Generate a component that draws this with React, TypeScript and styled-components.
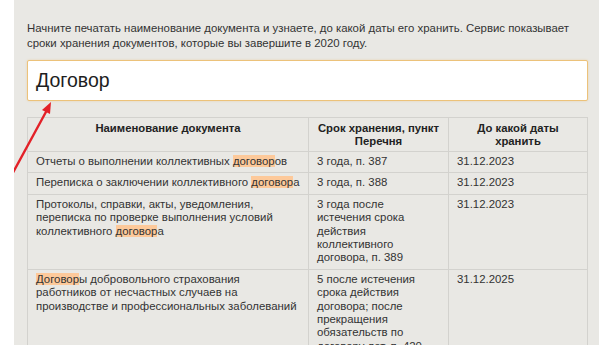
import styled, { createGlobalStyle } from 'styled-components';

const GlobalStyle = createGlobalStyle`
  html, body {
    margin: 0;
    padding: 0;
    background: #ffffff;
  }
  body {
    font-family: 'Liberation Sans', Arial, sans-serif;
  }
`;

const Page = styled.div`
  position: relative;
  margin-left: 14px;
  height: 345px;
  overflow: hidden;
  background: #e9e8e4;
  padding: 21px 11px 0 13px;
  box-sizing: border-box;
  color: #2b2b2b;
  font-family: 'Liberation Sans', Arial, sans-serif;
`;

const Intro = styled.p`
  margin: 0 0 9px;
  font-size: 11.4px;
  line-height: 15px;
  color: #333;
  white-space: nowrap;
`;

const SearchInput = styled.div`
  height: 41px;
  box-sizing: border-box;
  background: #fff;
  border: 1px solid #ecc27a;
  border-radius: 2px;
  box-shadow: 0 0 2px rgba(236, 194, 122, 0.6);
  padding: 0 8px;
  display: flex;
  align-items: center;
  font-size: 19.5px;
  color: #1e1e1e;
  margin-bottom: 16px;
`;

const Table = styled.table`
  width: 100%;
  border-collapse: collapse;
  table-layout: fixed;
  font-family: 'Liberation Sans', Arial, sans-serif;
  font-size: 11.4px;
  line-height: 13.4px;
`;

const Th = styled.th<{ $w?: number }>`
  ${p => (p.$w ? `width: ${p.$w}px;` : '')}
  border: 1px solid #d3d2ce;
  padding: 4px 8px 3px;
  font-size: 11.3px;
  line-height: 13px;
  font-weight: bold;
  text-align: center;
  vertical-align: top;
  color: #222;
`;

const Td = styled.td<{ $pr: number }>`
  border: 1px solid #d3d2ce;
  padding: 3px ${p => p.$pr}px 4px 8px;
  vertical-align: top;
  color: #333;
`;

const Mark = styled.span`
  background: #fdc99a;
`;

const Arrow = styled.svg`
  position: absolute;
  left: -14px;
  top: 0;
  pointer-events: none;
`;

const rows = [
  {
    name: <>Отчеты о выполнении коллективных <Mark>договор</Mark>ов</>,
    term: '3 года, п. 387',
    date: '31.12.2023',
  },
  {
    name: <>Переписка о заключении коллективного <Mark>договор</Mark>а</>,
    term: '3 года, п. 388',
    date: '31.12.2023',
  },
  {
    name: <>Протоколы, справки, акты, уведомления, переписка по проверке выполнения условий коллективного <Mark>договор</Mark>а</>,
    term: '3 года после истечения срока действия коллективного договора, п. 389',
    date: '31.12.2023',
  },
  {
    name: (
      <>
        <Mark>Договор</Mark>ы добровольного страхования
        <br />
        работников от несчастных случаев на
        <br />
        производстве и профессиональных заболеваний
      </>
    ),
    term: '5 после истечения срока действия договора; после прекращения обязательств по договору лет, п. 420',
    date: '31.12.2025',
  },
];

export default function App() {
  return (
    <>
      <GlobalStyle />
      <Page>
        <Intro>
          Начните печатать наименование документа и узнаете, до какой даты его хранить. Сервис показывает
          <br />
          сроки хранения документов, которые вы завершите в 2020 году.
        </Intro>
        <SearchInput>Договор</SearchInput>
        <Table>
          <thead>
            <tr>
              <Th $w={264}>Наименование документа</Th>
              <Th $w={123}>Срок хранения, пункт Перечня</Th>
              <Th>До какой даты хранить</Th>
            </tr>
          </thead>
          <tbody>
            {rows.map((r, i) => (
              <tr key={i}>
                <Td $pr={3}>{r.name}</Td>
                <Td $pr={10}>{r.term}</Td>
                <Td $pr={7}>{r.date}</Td>
              </tr>
            ))}
          </tbody>
        </Table>
        <Arrow width="70" height="200" viewBox="0 0 70 200">
          <line x1="10" y1="178" x2="47" y2="110" stroke="#e32128" strokeWidth="2.4" strokeLinecap="round" />
          <polygon points="51,102 42,110 50,114" fill="#e32128" />
        </Arrow>
      </Page>
    </>
  );
}
